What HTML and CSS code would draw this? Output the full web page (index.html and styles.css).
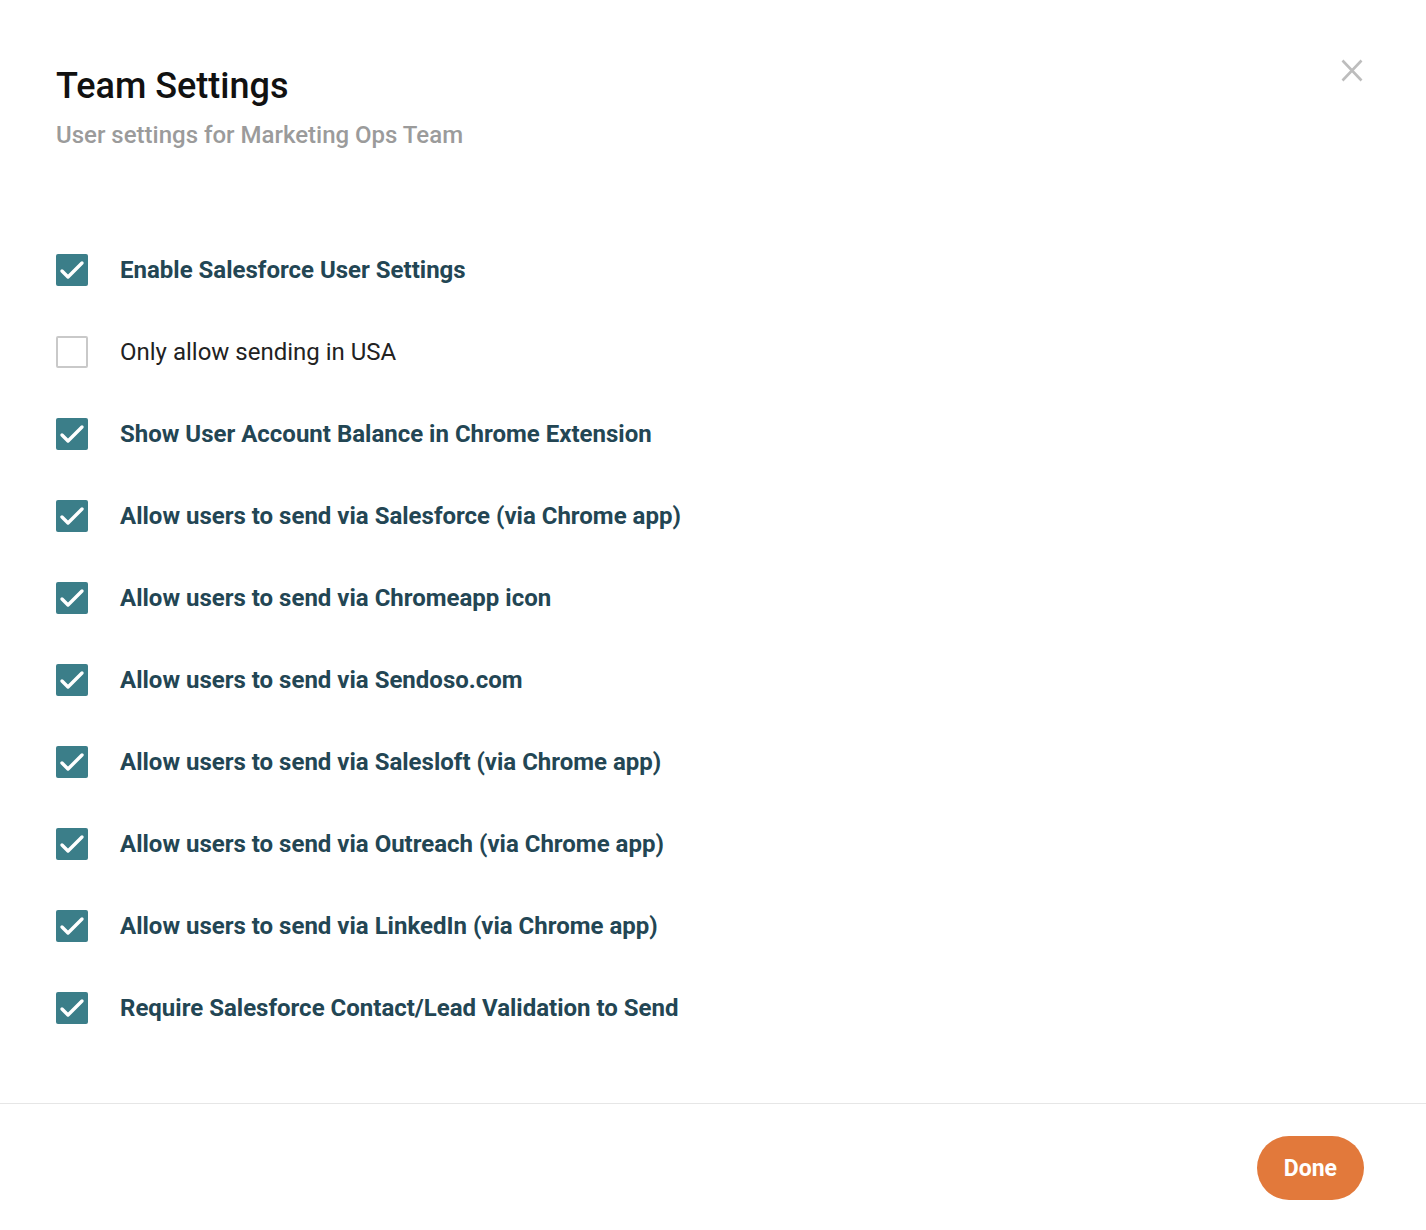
FILE: index.html
```html
<!DOCTYPE html>
<html lang="en">
<head>
    <meta charset="UTF-8">
    <meta name="viewport" content="width=device-width, initial-scale=1.0">
    <title>Team Settings</title>
    <link rel="stylesheet" href="styles.css">
</head>
<body>
    <div class="modal">
        <div class="modal-head">
            <div class="heading">
                <h1 class="title">Team Settings</h1>
                <p class="subtitle">User settings for Marketing Ops Team</p>
            </div>
            <button class="close" aria-label="Close">
                <svg width="22" height="23" viewBox="0 0 22 23">
                    <path d="M1.5 1.5 L20.5 21.5 M20.5 1.5 L1.5 21.5" stroke="#bdbdbd" stroke-width="2.6" fill="none"/>
                </svg>
            </button>
        </div>

        <ul class="options">
            <li class="option checked">
                <span class="box"><svg viewBox="0 0 32 32"><polyline points="6,17 12,23 26,9"/></svg></span>
                <span class="label">Enable Salesforce User Settings</span>
            </li>
            <li class="option">
                <span class="box"></span>
                <span class="label">Only allow sending in USA</span>
            </li>
            <li class="option checked">
                <span class="box"><svg viewBox="0 0 32 32"><polyline points="6,17 12,23 26,9"/></svg></span>
                <span class="label">Show User Account Balance in Chrome Extension</span>
            </li>
            <li class="option checked">
                <span class="box"><svg viewBox="0 0 32 32"><polyline points="6,17 12,23 26,9"/></svg></span>
                <span class="label">Allow users to send via Salesforce (via Chrome app)</span>
            </li>
            <li class="option checked">
                <span class="box"><svg viewBox="0 0 32 32"><polyline points="6,17 12,23 26,9"/></svg></span>
                <span class="label">Allow users to send via Chromeapp icon</span>
            </li>
            <li class="option checked">
                <span class="box"><svg viewBox="0 0 32 32"><polyline points="6,17 12,23 26,9"/></svg></span>
                <span class="label">Allow users to send via Sendoso.com</span>
            </li>
            <li class="option checked">
                <span class="box"><svg viewBox="0 0 32 32"><polyline points="6,17 12,23 26,9"/></svg></span>
                <span class="label">Allow users to send via Salesloft (via Chrome app)</span>
            </li>
            <li class="option checked">
                <span class="box"><svg viewBox="0 0 32 32"><polyline points="6,17 12,23 26,9"/></svg></span>
                <span class="label">Allow users to send via Outreach (via Chrome app)</span>
            </li>
            <li class="option checked">
                <span class="box"><svg viewBox="0 0 32 32"><polyline points="6,17 12,23 26,9"/></svg></span>
                <span class="label">Allow users to send via LinkedIn (via Chrome app)</span>
            </li>
            <li class="option checked">
                <span class="box"><svg viewBox="0 0 32 32"><polyline points="6,17 12,23 26,9"/></svg></span>
                <span class="label">Require Salesforce Contact/Lead Validation to Send</span>
            </li>
        </ul>

        <div class="modal-foot">
            <button class="done">Done</button>
        </div>
    </div>
</body>
</html>
```

FILE: styles.css
```css
*{
    box-sizing: border-box;
}
body{
    margin: 0;
    background: #fff;
    font-family: Roboto, "Liberation Sans", sans-serif;
}
.modal{
    width: 1426px;
    min-height: 1230px;
    display: flex;
    flex-direction: column;
}
.modal-head{
    display: flex;
    justify-content: space-between;
    align-items: flex-start;
    padding: 0 63px 0 56px;
}
.title{
    margin: 65px 0 0;
    font-size: 36px;
    line-height: 42px;
    font-weight: 500;
    color: #111;
}
.subtitle{
    margin: 14px 0 0;
    font-size: 24px;
    line-height: 28px;
    font-weight: 500;
    color: #9b9b9b;
}
.close{
    margin-top: 59px;
    padding: 0;
    border: 0;
    background: none;
    cursor: pointer;
    line-height: 0;
}

.options{
    list-style: none;
    margin: 105px 0 0;
    padding: 0 0 0 56px;
    display: flex;
    flex-direction: column;
    gap: 50px;
}
.option{
    display: flex;
    align-items: center;
    gap: 32px;
    height: 32px;
}
.box{
    width: 32px;
    height: 32px;
    flex: none;
    border: 2px solid #c9c9c9;
    border-radius: 2px;
    background: #fff;
}
.checked .box{
    border: 0;
    background: #3b7e89;
}
.box svg{
    display: block;
    width: 32px;
    height: 32px;
}
.box polyline{
    fill: none;
    stroke: #fff;
    stroke-width: 3.4;
    stroke-linecap: round;
    stroke-linejoin: round;
}
.label{
    font-size: 24px;
    line-height: 32px;
    color: #222;
}
.checked .label{
    font-weight: 700;
    color: #234654;
}

.modal-foot{
    margin-top: 79px;
    border-top: 1px solid #e6e6e6;
    padding: 32px 62px 30px 0;
    display: flex;
    justify-content: flex-end;
}
.done{
    height: 64px;
    padding: 0 27px;
    border: 0;
    border-radius: 32px;
    background: #e2793b;
    color: #fff;
    font-family: Roboto, "Liberation Sans", sans-serif;
    font-size: 23px;
    font-weight: 700;
    cursor: pointer;
}
```
